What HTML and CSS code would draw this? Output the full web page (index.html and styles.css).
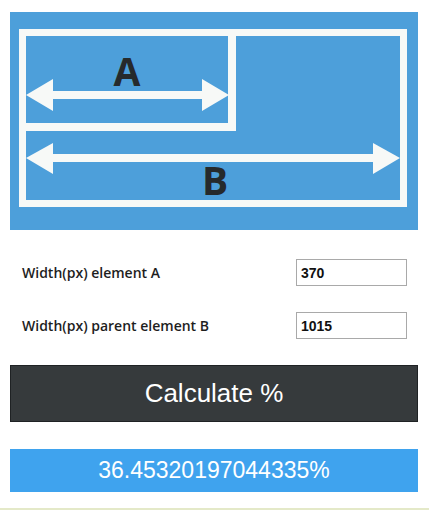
FILE: index.html
```
<!DOCTYPE html>
<html>
<head>
<meta charset="utf-8">
<link rel="stylesheet" href="styles.css">
</head>
<body>
<div class="page">
  <div class="figure">
    <svg width="408" height="218" viewBox="0 0 408 218" xmlns="http://www.w3.org/2000/svg">
      <rect x="0" y="0" width="408" height="218" fill="#4d9fda"/>
      <rect x="12.5" y="20.5" width="381" height="171" fill="none" stroke="#f7f9f7" stroke-width="7"/>
      <path d="M16 115 H222 V24" fill="none" stroke="#f7f9f7" stroke-width="8"/>
      <rect x="40" y="79" width="155" height="8" fill="#f7f9f7"/>
      <polygon points="16,83 43,67 43,99" fill="#f7f9f7"/>
      <polygon points="219,83 192,67 192,99" fill="#f7f9f7"/>
      <rect x="40" y="142" width="326" height="8" fill="#f7f9f7"/>
      <polygon points="16,146 43,131 43,162" fill="#f7f9f7"/>
      <polygon points="390,146 363,131 363,162" fill="#f7f9f7"/>
      <text x="117" y="74" class="letter" text-anchor="middle">A</text>
      <text x="205" y="183" class="letter" text-anchor="middle">B</text>
    </svg>
  </div>
  <div class="form">
    <div class="row">
      <label class="label">Width(px) element A</label>
      <input class="field" type="text" value="370">
    </div>
    <div class="row">
      <label class="label">Width(px) parent element B</label>
      <input class="field" type="text" value="1015">
    </div>
  </div>
  <button class="calc">Calculate %</button>
  <div class="result">36.45320197044335%</div>
</div>
</body>
</html>
```
FILE: styles.css
```
html, body {
  margin: 0;
  padding: 0;
  background: #ffffff;
}
.page {
  width: 429px;
  height: 510px;
  box-sizing: border-box;
  border-bottom: 2px solid #e4e9c8;
  padding: 12px 11px 0 10px;
  font-family: "Liberation Sans", Arial, sans-serif;
}
.figure {
  height: 218px;
}
.figure svg {
  display: block;
}
.letter {
  font-family: "Open Sans", "Liberation Sans", sans-serif;
  font-weight: 700;
  font-size: 39px;
  fill: #262a2c;
}
.form {
  display: flex;
  flex-direction: column;
  gap: 26px;
  padding: 29px 11px 0 12px;
}
.row {
  display: flex;
  align-items: center;
  justify-content: space-between;
  height: 27px;
}
.label {
  font-family: "Open Sans", "Liberation Sans", sans-serif;
  font-weight: 600;
  font-size: 14px;
  color: #1e1e1e;
}
.field {
  box-sizing: border-box;
  width: 111px;
  height: 27px;
  margin: 0;
  border: 1px solid #a9a9a9;
  padding: 0 4px;
  font-family: "Liberation Sans", Arial, sans-serif;
  font-weight: 700;
  font-size: 14px;
  color: #111;
  background: #fff;
  outline: none;
}
.calc {
  display: block;
  box-sizing: border-box;
  width: 408px;
  height: 57px;
  margin: 26px 0 0 0;
  padding: 0;
  border: 1px solid #1f2224;
  background: #363a3c;
  color: #ffffff;
  font-family: "Liberation Sans", Arial, sans-serif;
  font-size: 26px;
  text-align: center;
  cursor: pointer;
}
.result {
  box-sizing: border-box;
  width: 408px;
  height: 43px;
  margin-top: 27px;
  background: #3fa3ee;
  color: #ffffff;
  font-size: 23px;
  display: flex;
  align-items: center;
  justify-content: center;
}
```
